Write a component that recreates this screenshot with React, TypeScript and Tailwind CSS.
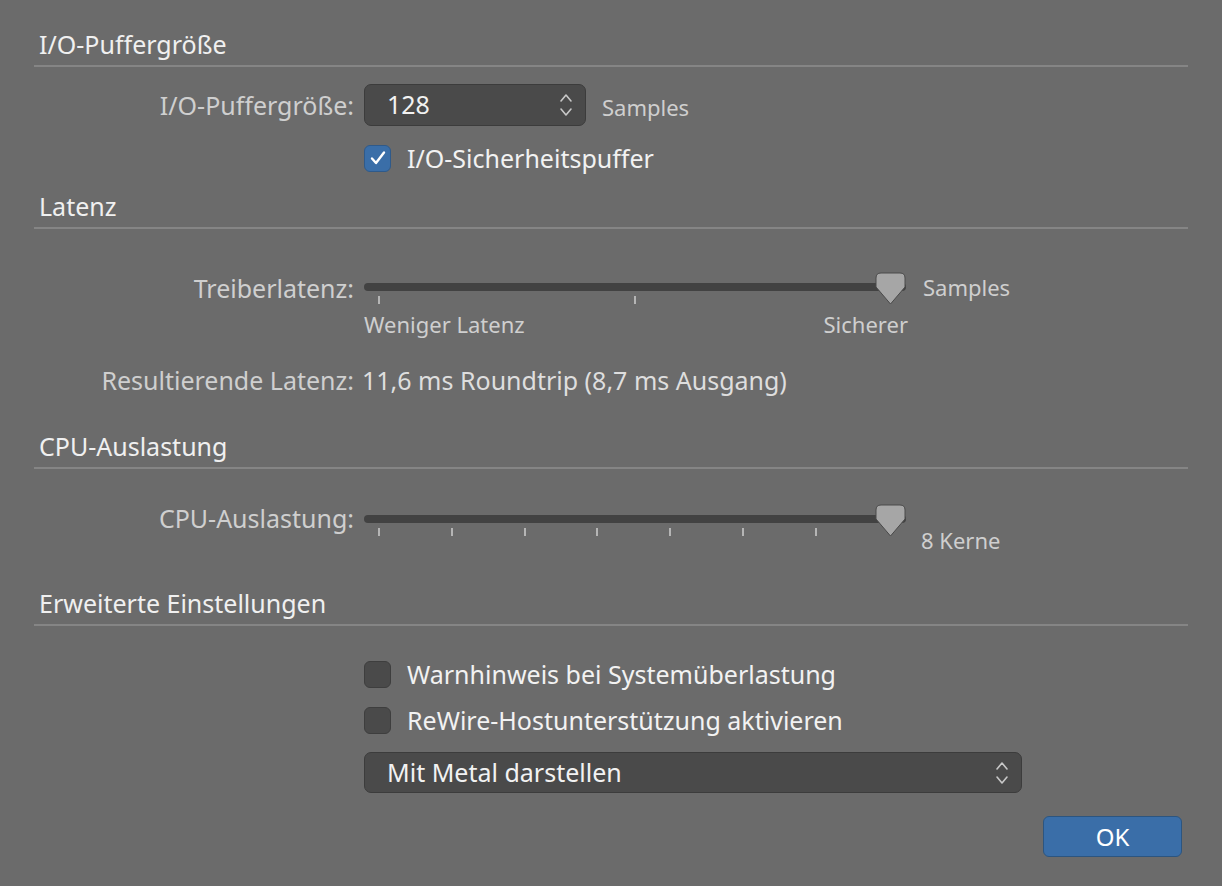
import React from 'react';

const Header: React.FC<{ title: string; h: string }> = ({ title, h }) => (
  <div className={`${h} flex flex-col justify-end`}>
    <div className="pl-[5px] text-[25px] leading-[30px] text-[#f0f0f0]">{title}</div>
    <div className="mt-[6px] h-[2px] bg-[#858585]" />
  </div>
);

const Label: React.FC<{ children: React.ReactNode }> = ({ children }) => (
  <div className="w-[320px] shrink-0 text-right text-[25px] leading-[28px] text-[#cfcfcf]">{children}</div>
);

const Stepper: React.FC = () => (
  <svg width="14" height="26" viewBox="0 0 14 26" fill="none" stroke="#c8c8c8" strokeWidth="1.6" strokeLinecap="round" strokeLinejoin="round">
    <path d="M2 9 L7 3 L12 9" />
    <path d="M2 17 L7 23 L12 17" />
  </svg>
);

const Checkbox: React.FC<{ checked?: boolean; label: string }> = ({ checked, label }) => (
  <div className="flex items-center gap-[16px]">
    <div
      className={`w-[27px] h-[27px] rounded-[6px] border flex items-center justify-center ${
        checked ? 'bg-[#3a6ea8] border-[#2f5a8a]' : 'bg-[#4a4a4a] border-[#3e3e3e]'
      }`}
    >
      {checked && (
        <svg width="18" height="18" viewBox="0 0 18 18" fill="none" stroke="#fff" strokeWidth="2.4" strokeLinecap="round" strokeLinejoin="round">
          <path d="M3 9.5 L7 14 L15 3.5" />
        </svg>
      )}
    </div>
    <span className="text-[25px] leading-[28px] text-[#f2f2f2]">{label}</span>
  </div>
);

const Slider: React.FC<{ ticks: number[] }> = ({ ticks }) => (
  <div className="relative w-[542px] h-[34px]">
    <div className="absolute left-0 right-0 top-[11px] h-[8px] rounded-full bg-[#424242]" />
    {ticks.map((x) => (
      <div key={x} className="absolute top-[24px] w-[2px] h-[8px] bg-[#b5b5b5]" style={{ left: x }} />
    ))}
    <svg className="absolute left-[511px] top-[0px]" width="31" height="34" viewBox="0 0 31 34">
      <path d="M6 1 H25 Q30 1 30 6 V15 L15.5 32 L1 15 V6 Q1 1 6 1 Z" fill="#a6a6a6" stroke="#4a4a4a" strokeWidth="1" />
    </svg>
  </div>
);

export default function App() {
  return (
    <div
      className="w-[1222px] h-[886px] bg-[#6b6b6b] px-[34px] overflow-hidden"
      style={{ fontFamily: '"Noto Sans", "Liberation Sans", sans-serif' }}
    >
      <Header title="I/O-Puffergröße" h="h-[67px]" />
      <div className="flex items-center gap-[10px] mt-[17px]">
        <Label>I/O-Puffergröße:</Label>
        <div className="w-[222px] h-[42px] rounded-[7px] bg-[#4a4a4a] border border-[#3c3c3c] flex items-center justify-between pl-[22px] pr-[12px]">
          <span className="text-[25px] text-[#f2f2f2]">128</span>
          <Stepper />
        </div>
        <span className="ml-[6px] mt-[5px] text-[22px] text-[#cfcfcf]">Samples</span>
      </div>
      <div className="ml-[330px] mt-[18px]">
        <Checkbox checked label="I/O-Sicherheitspuffer" />
      </div>

      <Header title="Latenz" h="h-[57px]" />
      <div className="flex items-start gap-[10px] mt-[43px]">
        <Label>
          <span className="relative top-[2px]">Treiberlatenz:</span>
        </Label>
        <div className="flex flex-col">
          <Slider ticks={[14, 270]} />
          <div className="flex justify-between w-[544px] text-[22px] leading-[28px] text-[#cfcfcf] mt-[4px]">
            <span>Weniger Latenz</span>
            <span>Sicherer</span>
          </div>
        </div>
        <span className="ml-[5px] text-[22px] text-[#cfcfcf] mt-[-1px]">Samples</span>
      </div>
      <div className="flex items-center gap-[8px] mt-[28px]">
        <Label>Resultierende Latenz:</Label>
        <span className="text-[25px] leading-[28px] text-[#dedede]">11,6 ms Roundtrip (8,7 ms Ausgang)</span>
      </div>

      <Header title="CPU-Auslastung" h="h-[75px]" />
      <div className="flex items-start gap-[10px] mt-[35px]">
        <Label>
          <span className="relative top-[0px]">CPU-Auslastung:</span>
        </Label>
        <Slider ticks={[14, 87, 160, 232, 305, 378, 451]} />
        <span className="ml-[5px] mt-[20px] text-[22px] text-[#cfcfcf]">8 Kerne</span>
      </div>

      <Header title="Erweiterte Einstellungen" h="h-[69px]" />
      <div className="ml-[330px] mt-[34px] flex flex-col gap-[18px]">
        <Checkbox label="Warnhinweis bei Systemüberlastung" />
        <Checkbox label="ReWire-Hostunterstützung aktivieren" />
      </div>
      <div className="ml-[330px] mt-[18px] w-[658px] h-[41px] rounded-[7px] bg-[#4a4a4a] border border-[#3c3c3c] flex items-center justify-between pl-[22px] pr-[12px]">
        <span className="text-[25px] text-[#f2f2f2]">Mit Metal darstellen</span>
        <Stepper />
      </div>
      <div className="flex justify-end mt-[23px] pr-[6px]">
        <button className="w-[139px] h-[41px] rounded-[6px] bg-[#3a6ea8] border border-[#2c5580] text-[24px] text-white">
          OK
        </button>
      </div>
    </div>
  );
}
